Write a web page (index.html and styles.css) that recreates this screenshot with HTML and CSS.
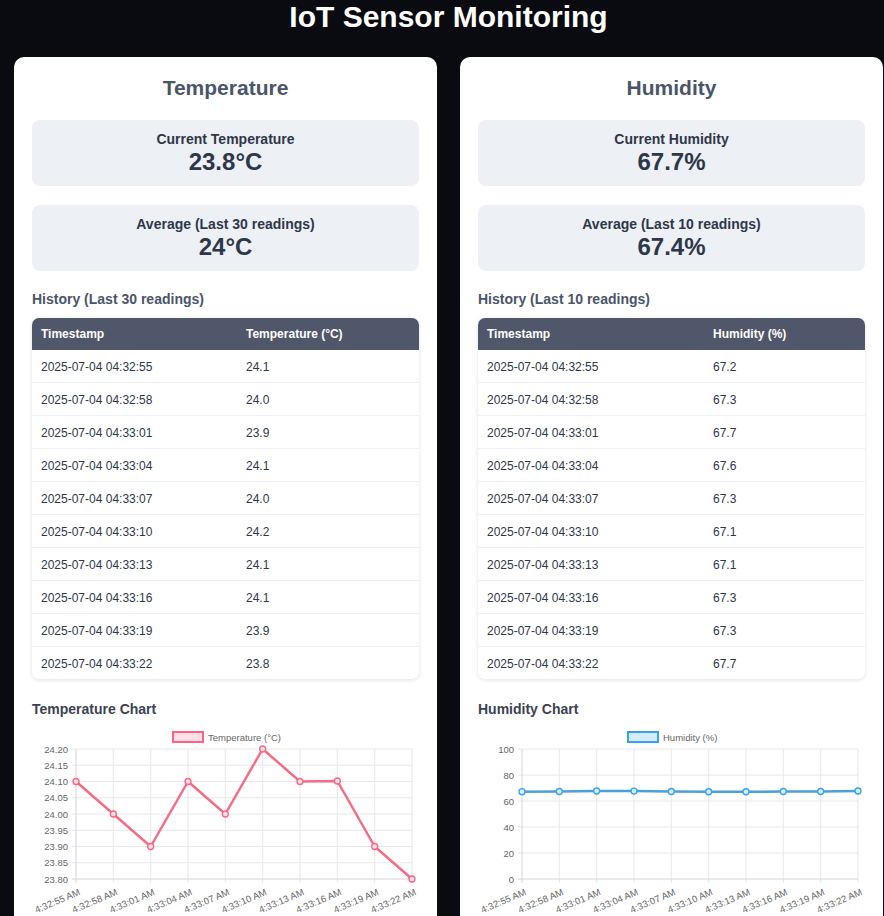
FILE: index.html
```html
<!DOCTYPE html>
<html lang="en">
<head>
<meta charset="utf-8">
<title>IoT Sensor Monitoring</title>
<link rel="stylesheet" href="styles.css">
</head>
<body>
<div class="page">
  <h1 class="title">IoT Sensor Monitoring</h1>
  <div class="grid">
    <section class="card">
      <h2 class="card-title">Temperature</h2>
      <div class="stat">
        <div class="stat-label">Current Temperature</div>
        <div class="stat-value">23.8°C</div>
      </div>
      <div class="stat">
        <div class="stat-label">Average (Last 30 readings)</div>
        <div class="stat-value">24°C</div>
      </div>
      <h3 class="section-title">History (Last 30 readings)</h3>
      <div class="table-wrap">
        <table class="data">
          <colgroup><col class="col-temp"><col></colgroup>
          <thead><tr><th>Timestamp</th><th>Temperature (°C)</th></tr></thead>
          <tbody>
            <tr><td>2025-07-04 04:32:55</td><td>24.1</td></tr>
            <tr><td>2025-07-04 04:32:58</td><td>24.0</td></tr>
            <tr><td>2025-07-04 04:33:01</td><td>23.9</td></tr>
            <tr><td>2025-07-04 04:33:04</td><td>24.1</td></tr>
            <tr><td>2025-07-04 04:33:07</td><td>24.0</td></tr>
            <tr><td>2025-07-04 04:33:10</td><td>24.2</td></tr>
            <tr><td>2025-07-04 04:33:13</td><td>24.1</td></tr>
            <tr><td>2025-07-04 04:33:16</td><td>24.1</td></tr>
            <tr><td>2025-07-04 04:33:19</td><td>23.9</td></tr>
            <tr><td>2025-07-04 04:33:22</td><td>23.8</td></tr>
          </tbody>
        </table>
      </div>
      <h3 class="chart-title">Temperature Chart</h3>
      <svg class="chart" width="386" height="200" viewBox="0 0 386 200">
        <rect x="141" y="8" width="30" height="10" class="leg-temp"/>
        <text x="176" y="17" class="ctext">Temperature (°C)</text>
        <g class="grid-lines">
          <line x1="40" y1="25" x2="380" y2="25"/>
          <line x1="40" y1="41.25" x2="380" y2="41.25"/>
          <line x1="40" y1="57.5" x2="380" y2="57.5"/>
          <line x1="40" y1="73.75" x2="380" y2="73.75"/>
          <line x1="40" y1="90" x2="380" y2="90"/>
          <line x1="40" y1="106.25" x2="380" y2="106.25"/>
          <line x1="40" y1="122.5" x2="380" y2="122.5"/>
          <line x1="40" y1="138.75" x2="380" y2="138.75"/>
          <line x1="81.33" y1="25" x2="81.33" y2="159"/>
          <line x1="118.67" y1="25" x2="118.67" y2="159"/>
          <line x1="156" y1="25" x2="156" y2="159"/>
          <line x1="193.33" y1="25" x2="193.33" y2="159"/>
          <line x1="230.67" y1="25" x2="230.67" y2="159"/>
          <line x1="268" y1="25" x2="268" y2="159"/>
          <line x1="305.33" y1="25" x2="305.33" y2="159"/>
          <line x1="342.67" y1="25" x2="342.67" y2="159"/>
          <line x1="380" y1="25" x2="380" y2="159"/>
        </g>
        <g class="axis-lines">
          <line x1="44" y1="25" x2="44" y2="159"/>
          <line x1="40" y1="155" x2="380" y2="155"/>
        </g>
        <g class="ctext yl">
          <text x="36" y="28.5">24.20</text>
          <text x="36" y="44.75">24.15</text>
          <text x="36" y="61">24.10</text>
          <text x="36" y="77.25">24.05</text>
          <text x="36" y="93.5">24.00</text>
          <text x="36" y="109.75">23.95</text>
          <text x="36" y="126">23.90</text>
          <text x="36" y="142.25">23.85</text>
          <text x="36" y="158.5">23.80</text>
        </g>
        <g class="ctext xl">
          <text transform="translate(46,164) rotate(-23)" dy="7">4:32:55 AM</text>
          <text transform="translate(83.33,164) rotate(-23)" dy="7">4:32:58 AM</text>
          <text transform="translate(120.67,164) rotate(-23)" dy="7">4:33:01 AM</text>
          <text transform="translate(158,164) rotate(-23)" dy="7">4:33:04 AM</text>
          <text transform="translate(195.33,164) rotate(-23)" dy="7">4:33:07 AM</text>
          <text transform="translate(232.67,164) rotate(-23)" dy="7">4:33:10 AM</text>
          <text transform="translate(270,164) rotate(-23)" dy="7">4:33:13 AM</text>
          <text transform="translate(307.33,164) rotate(-23)" dy="7">4:33:16 AM</text>
          <text transform="translate(344.67,164) rotate(-23)" dy="7">4:33:19 AM</text>
          <text transform="translate(382,164) rotate(-23)" dy="7">4:33:22 AM</text>
        </g>
        <polyline class="line-temp" points="44,57.5 81.33,90 118.67,122.5 156,57.5 193.33,90 230.67,25 268,57.5 305.33,57 342.67,122.5 380,155"/>
        <g class="pt-temp">
          <circle cx="44" cy="57.5" r="3"/>
          <circle cx="81.33" cy="90" r="3"/>
          <circle cx="118.67" cy="122.5" r="3"/>
          <circle cx="156" cy="57.5" r="3"/>
          <circle cx="193.33" cy="90" r="3"/>
          <circle cx="230.67" cy="25" r="3"/>
          <circle cx="268" cy="57.5" r="3"/>
          <circle cx="305.33" cy="57" r="3"/>
          <circle cx="342.67" cy="122.5" r="3"/>
          <circle cx="380" cy="155" r="3"/>
        </g>
      </svg>
    </section>

    <section class="card">
      <h2 class="card-title">Humidity</h2>
      <div class="stat">
        <div class="stat-label">Current Humidity</div>
        <div class="stat-value">67.7%</div>
      </div>
      <div class="stat">
        <div class="stat-label">Average (Last 10 readings)</div>
        <div class="stat-value">67.4%</div>
      </div>
      <h3 class="section-title">History (Last 10 readings)</h3>
      <div class="table-wrap">
        <table class="data">
          <colgroup><col class="col-hum"><col></colgroup>
          <thead><tr><th>Timestamp</th><th>Humidity (%)</th></tr></thead>
          <tbody>
            <tr><td>2025-07-04 04:32:55</td><td>67.2</td></tr>
            <tr><td>2025-07-04 04:32:58</td><td>67.3</td></tr>
            <tr><td>2025-07-04 04:33:01</td><td>67.7</td></tr>
            <tr><td>2025-07-04 04:33:04</td><td>67.6</td></tr>
            <tr><td>2025-07-04 04:33:07</td><td>67.3</td></tr>
            <tr><td>2025-07-04 04:33:10</td><td>67.1</td></tr>
            <tr><td>2025-07-04 04:33:13</td><td>67.1</td></tr>
            <tr><td>2025-07-04 04:33:16</td><td>67.3</td></tr>
            <tr><td>2025-07-04 04:33:19</td><td>67.3</td></tr>
            <tr><td>2025-07-04 04:33:22</td><td>67.7</td></tr>
          </tbody>
        </table>
      </div>
      <h3 class="chart-title">Humidity Chart</h3>
      <svg class="chart" width="386" height="200" viewBox="0 0 386 200">
        <rect x="150" y="8" width="30" height="10" class="leg-hum"/>
        <text x="185" y="17" class="ctext">Humidity (%)</text>
        <g class="grid-lines">
          <line x1="40" y1="25" x2="380" y2="25"/>
          <line x1="40" y1="51" x2="380" y2="51"/>
          <line x1="40" y1="77" x2="380" y2="77"/>
          <line x1="40" y1="103" x2="380" y2="103"/>
          <line x1="40" y1="129" x2="380" y2="129"/>
          <line x1="81.33" y1="25" x2="81.33" y2="159"/>
          <line x1="118.67" y1="25" x2="118.67" y2="159"/>
          <line x1="156" y1="25" x2="156" y2="159"/>
          <line x1="193.33" y1="25" x2="193.33" y2="159"/>
          <line x1="230.67" y1="25" x2="230.67" y2="159"/>
          <line x1="268" y1="25" x2="268" y2="159"/>
          <line x1="305.33" y1="25" x2="305.33" y2="159"/>
          <line x1="342.67" y1="25" x2="342.67" y2="159"/>
          <line x1="380" y1="25" x2="380" y2="159"/>
        </g>
        <g class="axis-lines">
          <line x1="44" y1="25" x2="44" y2="159"/>
          <line x1="40" y1="155" x2="380" y2="155"/>
        </g>
        <g class="ctext yl">
          <text x="36" y="28.5">100</text>
          <text x="36" y="54.5">80</text>
          <text x="36" y="80.5">60</text>
          <text x="36" y="106.5">40</text>
          <text x="36" y="132.5">20</text>
          <text x="36" y="158.5">0</text>
        </g>
        <g class="ctext xl">
          <text transform="translate(46,164) rotate(-23)" dy="7">4:32:55 AM</text>
          <text transform="translate(83.33,164) rotate(-23)" dy="7">4:32:58 AM</text>
          <text transform="translate(120.67,164) rotate(-23)" dy="7">4:33:01 AM</text>
          <text transform="translate(158,164) rotate(-23)" dy="7">4:33:04 AM</text>
          <text transform="translate(195.33,164) rotate(-23)" dy="7">4:33:07 AM</text>
          <text transform="translate(232.67,164) rotate(-23)" dy="7">4:33:10 AM</text>
          <text transform="translate(270,164) rotate(-23)" dy="7">4:33:13 AM</text>
          <text transform="translate(307.33,164) rotate(-23)" dy="7">4:33:16 AM</text>
          <text transform="translate(344.67,164) rotate(-23)" dy="7">4:33:19 AM</text>
          <text transform="translate(382,164) rotate(-23)" dy="7">4:33:22 AM</text>
        </g>
        <polyline class="line-hum" points="44,67.64 81.33,67.51 118.67,66.99 156,67.12 193.33,67.51 230.67,67.77 268,67.77 305.33,67.51 342.67,67.51 380,66.99"/>
        <g class="pt-hum">
          <circle cx="44" cy="67.64" r="3"/>
          <circle cx="81.33" cy="67.51" r="3"/>
          <circle cx="118.67" cy="66.99" r="3"/>
          <circle cx="156" cy="67.12" r="3"/>
          <circle cx="193.33" cy="67.51" r="3"/>
          <circle cx="230.67" cy="67.77" r="3"/>
          <circle cx="268" cy="67.77" r="3"/>
          <circle cx="305.33" cy="67.51" r="3"/>
          <circle cx="342.67" cy="67.51" r="3"/>
          <circle cx="380" cy="66.99" r="3"/>
        </g>
      </svg>
    </section>
  </div>
</div>
</body>
</html>
```

FILE: styles.css
```css
html, body {
  margin: 0;
  padding: 0;
  overflow: hidden;
  background: #0a0b10;
}

body {
  font-family: "Liberation Sans", Arial, Helvetica, sans-serif;
  color: #2d3748;
}

.page {
  width: 897px;
  height: 916px;
  box-sizing: border-box;
  padding: 0 14px;
  overflow: hidden;
}

.title {
  margin: 0 0 25px;
  padding-top: 2px;
  font-size: 30px;
  line-height: 30px;
  font-weight: 700;
  color: #ffffff;
  text-align: center;
}

.grid {
  display: grid;
  grid-template-columns: 423px 423px;
  column-gap: 23px;
  align-items: start;
}

.card {
  background: #ffffff;
  border-radius: 10px;
  padding: 18px 18px 24px;
}

.card-title {
  margin: 0 0 20px;
  font-size: 21px;
  line-height: 25px;
  font-weight: 700;
  color: #4a5568;
  text-align: center;
}

.stat {
  background: #edf0f5;
  border-radius: 8px;
  padding: 11px 10px 10px;
  margin-bottom: 19px;
  text-align: center;
}

.stat-label {
  font-size: 14px;
  line-height: 17px;
  font-weight: 700;
  color: #2d3748;
}

.stat-value {
  font-size: 24px;
  line-height: 28px;
  font-weight: 700;
  color: #2d3748;
}

.section-title {
  margin: 20px 0 10px;
  font-size: 14px;
  line-height: 17px;
  font-weight: 700;
  color: #4a5568;
}

.table-wrap {
  border-radius: 7px;
  overflow: hidden;
  box-shadow: 0 1px 4px rgba(0, 0, 0, 0.12);
}

.data {
  width: 100%;
  border-collapse: collapse;
  table-layout: fixed;
  font-size: 12px;
  line-height: 16px;
}

.col-temp { width: 205px; }
.col-hum { width: 226px; }

.data th {
  background: #50576b;
  color: #ffffff;
  font-weight: 700;
  text-align: left;
  padding: 8px 9px;
}

.data td {
  padding: 9px 9px 7px;
  border-bottom: 1px solid #eef0f3;
  color: #2d3748;
  text-align: left;
}

.data tbody tr:last-child td {
  border-bottom: none;
}

.chart-title {
  margin: 22px 0 6px;
  font-size: 14px;
  line-height: 17px;
  font-weight: 700;
  color: #3b4252;
}

.chart {
  display: block;
}

.ctext {
  font-family: "Liberation Sans", Arial, Helvetica, sans-serif;
  font-size: 9.5px;
  fill: #666666;
}

.yl text { text-anchor: end; }
.xl text { text-anchor: end; }

.grid-lines line {
  stroke: #e8e8e8;
  stroke-width: 1;
}

.axis-lines line {
  stroke: #d4d4d4;
  stroke-width: 1;
}

.leg-temp {
  fill: rgba(255, 99, 132, 0.2);
  stroke: #ff6384;
  stroke-width: 2;
}

.leg-hum {
  fill: rgba(54, 162, 235, 0.2);
  stroke: #36a2eb;
  stroke-width: 2;
}

.line-temp {
  fill: none;
  stroke: #f46d85;
  stroke-width: 2.5;
  stroke-linejoin: round;
}

.line-hum {
  fill: none;
  stroke: #4a9fe0;
  stroke-width: 2.5;
  stroke-linejoin: round;
}

.pt-temp circle {
  fill: #fde3e8;
  stroke: #ff6384;
  stroke-width: 1.3;
}

.pt-hum circle {
  fill: #d9ecfb;
  stroke: #36a2eb;
  stroke-width: 1.3;
}
```
